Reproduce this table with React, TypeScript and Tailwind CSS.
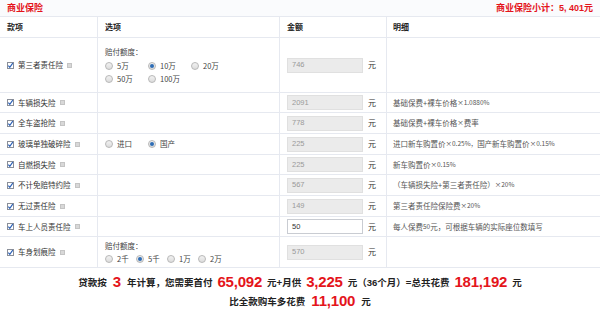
import React from "react";

const CJK = { fontFamily: '"Noto Sans CJK SC", "Liberation Sans", sans-serif' };
const NUM = { fontFamily: '"Liberation Sans", Arial, sans-serif' };

function Check() {
  return (
    <span className="relative inline-block w-[7px] h-[7px] border border-[#8a8f99] bg-white shrink-0">
      <svg viewBox="0 0 8 8" className="absolute left-[-1px] top-[-1px] w-[7px] h-[7px]">
        <path d="M1.5 4.2 L3.2 6 L6.6 1.2" fill="none" stroke="#2a5fb5" strokeWidth="1.3" />
      </svg>
    </span>
  );
}

function Help() {
  return <span className="inline-block w-[5px] h-[5px] bg-[#d8d8d8] border border-[#c4c4c4] ml-[4px] shrink-0" />;
}

function Radio({ on }: { on?: boolean }) {
  return (
    <span className="inline-flex items-center justify-center w-[8px] h-[8px] rounded-full border border-[#b8b8b8] bg-gradient-to-b from-[#f2f2f2] to-[#dcdcdc] shrink-0">
      {on && <span className="block w-[4px] h-[4px] rounded-full bg-[#2f6db5]" />}
    </span>
  );
}

function RadioItem({ label, on, w }: { label: string; on?: boolean; w: string }) {
  return (
    <span className={`flex items-center gap-[4px] ${w}`}>
      <Radio on={on} />
      <span>{label}</span>
    </span>
  );
}

function Amount({ v, white }: { v: string; white?: boolean }) {
  return (
    <div className="flex items-center">
      <div
        className={`ml-[7px] w-[76px] h-[15px] border flex items-center pl-[4px] text-[7.5px] ${
          white ? "bg-white border-[#c9ccd2] text-[#333]" : "bg-[#ebebeb] border-[#e0e0e0] text-[#9a9a9a]"
        }`}
        style={NUM}
      >
        {v}
      </div>
      <span className="ml-[5px] text-[8px] text-[#333]">元</span>
    </div>
  );
}

type Row = {
  name: string;
  h: string;
  amount: string;
  white?: boolean;
  detail?: React.ReactNode;
  option?: React.ReactNode;
};

const rows: Row[] = [
  {
    name: "第三者责任险",
    h: "h-[55px]",
    amount: "746",
    option: (
      <div className="flex flex-col leading-[13px]">
        <span>赔付额度：</span>
        <div className="flex mt-[1px]">
          <RadioItem label="5万" w="w-[43px]" />
          <RadioItem label="10万" on w="w-[43px]" />
          <RadioItem label="20万" w="w-[43px]" />
        </div>
        <div className="flex">
          <RadioItem label="50万" w="w-[43px]" />
          <RadioItem label="100万" w="w-[43px]" />
        </div>
      </div>
    ),
  },
  { name: "车辆损失险", h: "h-[20px]", amount: "2091", detail: <>基础保费+裸车价格<span className="text-[6.5px]">×1.0880%</span></> },
  { name: "全车盗抢险", h: "h-[21px]", amount: "778", detail: <>基础保费+裸车价格<span className="text-[6.5px]">×</span>费率</> },
  {
    name: "玻璃单独破碎险",
    h: "h-[21px]",
    amount: "225",
    option: (
      <div className="flex">
        <RadioItem label="进口" w="w-[43px]" />
        <RadioItem label="国产" on w="w-[43px]" />
      </div>
    ),
    detail: <>进口新车购置价<span className="text-[6.5px]">×0.25%，</span>国产新车购置价<span className="text-[6.5px]">×0.15%</span></>,
  },
  { name: "自燃损失险", h: "h-[20px]", amount: "225", detail: <>新车购置价<span className="text-[6.5px]">×0.15%</span></> },
  { name: "不计免赔特约险", h: "h-[21px]", amount: "567", detail: <>（车辆损失险+第三者责任险）<span className="text-[6.5px]">×20%</span></> },
  { name: "无过责任险", h: "h-[21px]", amount: "149", detail: <>第三者责任险保险费<span className="text-[6.5px]">×20%</span></> },
  { name: "车上人员责任险", h: "h-[20px]", amount: "50", white: true, detail: <>每人保费<span className="text-[6.5px]">50</span>元，可根据车辆的实际座位数填写</> },
  {
    name: "车身划痕险",
    h: "h-[31px]",
    amount: "570",
    option: (
      <div className="flex flex-col leading-[13px]">
        <span>赔付额度：</span>
        <div className="flex">
          <RadioItem label="2千" w="w-[31px]" />
          <RadioItem label="5千" on w="w-[31px]" />
          <RadioItem label="1万" w="w-[31px]" />
          <RadioItem label="2万" w="w-[31px]" />
        </div>
      </div>
    ),
  },
];

const GRID = "grid grid-cols-[98px_182px_107px_213px]";
const LINE = "border-[#e6e9f0]";

export default function App() {
  return (
    <div className="w-[600px] h-[313px] bg-white overflow-hidden text-[#333]" style={CJK}>
      <div className={`h-[17px] flex items-center justify-between px-[7px] bg-[#fafbfd] border-b ${LINE} text-[9px] font-bold text-[#e4141b]`}>
        <span>商业保险</span>
        <span>
          商业保险小计：<span style={NUM}>5, 401</span>元
        </span>
      </div>
      <div className={`${GRID} h-[21px] border-b ${LINE} text-[8px] font-bold text-[#222]`}>
        <div className={`flex items-center pl-[7px] border-r ${LINE}`}>款项</div>
        <div className={`flex items-center pl-[7px] border-r ${LINE}`}>选项</div>
        <div className={`flex items-center pl-[7px] border-r ${LINE}`}>金额</div>
        <div className="flex items-center pl-[6px]">明细</div>
      </div>
      {rows.map((r) => (
        <div key={r.name} className={`${GRID} ${r.h} border-b ${LINE} text-[7.5px]`}>
          <div className={`flex items-center pl-[7px] border-r ${LINE}`}>
            <Check />
            <span className="ml-[4px] text-[#333]">{r.name}</span>
            <Help />
          </div>
          <div className={`flex items-center pl-[7px] border-r ${LINE} text-[#444]`}>{r.option}</div>
          <div className={`flex items-center border-r ${LINE}`}>
            <Amount v={r.amount} white={r.white} />
          </div>
          <div className="flex items-center pl-[6px] text-[#555] whitespace-nowrap">{r.detail}</div>
        </div>
      ))}
      <div className="flex flex-col items-center pt-[5px] font-bold text-[#222] text-[9.5px]">
        <div className="flex items-baseline h-[19px] items-center">
          <span>贷款按</span>
          <span className="mx-[6px] text-[15px] text-[#e4141b] tracking-[-0.2px]" style={NUM}>3</span>
          <span>年计算，您需要首付</span>
          <span className="mx-[5px] text-[15px] text-[#e4141b] tracking-[-0.2px]" style={NUM}>65,092</span>
          <span>元+月供</span>
          <span className="mx-[5px] text-[15px] text-[#e4141b] tracking-[-0.2px]" style={NUM}>3,225</span>
          <span>元（<span style={NUM}>36</span>个月）=总共花费</span>
          <span className="mx-[5px] text-[15px] text-[#e4141b] tracking-[-0.2px]" style={NUM}>181,192</span>
          <span>元</span>
        </div>
        <div className="flex items-center h-[19px]">
          <span>比全款购车多花费</span>
          <span className="mx-[6px] text-[15px] text-[#e4141b] tracking-[-0.2px]" style={NUM}>11,100</span>
          <span>元</span>
        </div>
      </div>
    </div>
  );
}
